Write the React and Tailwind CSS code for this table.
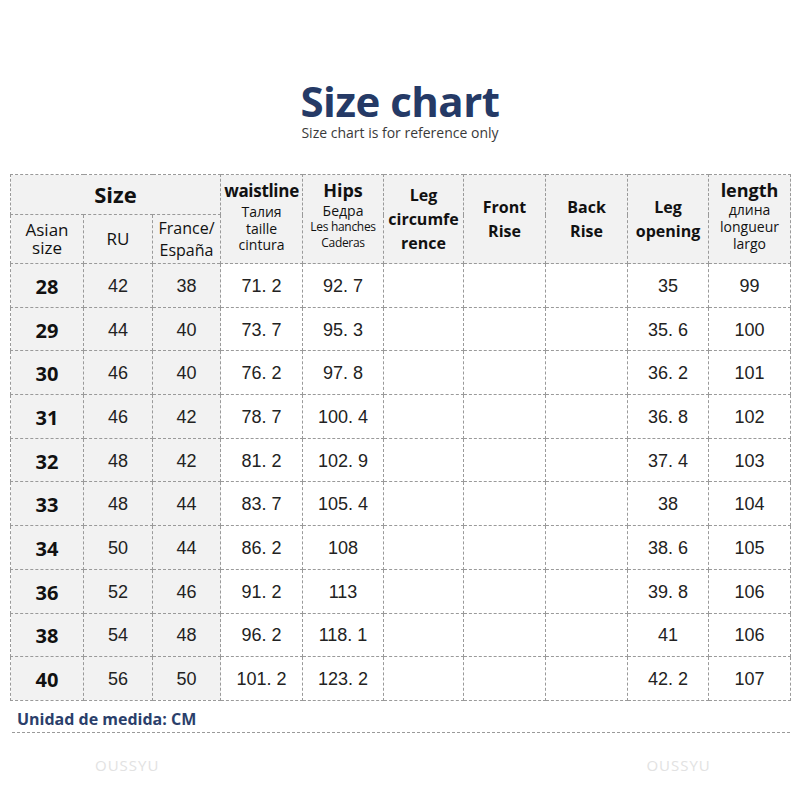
import React from 'react';

const rows = [
  ['28', '42', '38', '71. 2', '92. 7', '35', '99'],
  ['29', '44', '40', '73. 7', '95. 3', '35. 6', '100'],
  ['30', '46', '40', '76. 2', '97. 8', '36. 2', '101'],
  ['31', '46', '42', '78. 7', '100. 4', '36. 8', '102'],
  ['32', '48', '42', '81. 2', '102. 9', '37. 4', '103'],
  ['33', '48', '44', '83. 7', '105. 4', '38', '104'],
  ['34', '50', '44', '86. 2', '108', '38. 6', '105'],
  ['36', '52', '46', '91. 2', '113', '39. 8', '106'],
  ['38', '54', '48', '96. 2', '118. 1', '41', '106'],
  ['40', '56', '50', '101. 2', '123. 2', '42. 2', '107'],
];

const cell = 'border border-dashed border-[#9a9a9a] text-center align-middle p-0';
const num = "font-['Liberation_Sans',sans-serif] text-[18px] text-[#222] pt-[2px]";

export default function App() {
  return (
    <div className="w-[800px] h-[800px] bg-white font-['Open_Sans',sans-serif] text-[#111]">
      <div className="flex flex-col items-center pt-[78px]">
        <h1 className="text-[42px] font-bold leading-[46px] text-[#253a66] tracking-[-0.5px]">Size chart</h1>
        <p className="text-[14px] leading-[17px] text-[#3a3a3a]">Size chart is for reference only</p>
      </div>

      <div className="pl-[10px] pt-[33px]">
        <table className="border-collapse table-fixed w-[780px]">
          <colgroup>
            <col className="w-[73px]" />
            <col className="w-[69px]" />
            <col className="w-[68px]" />
            <col className="w-[82px]" />
            <col className="w-[81px]" />
            <col className="w-[80px]" />
            <col className="w-[82px]" />
            <col className="w-[82px]" />
            <col className="w-[81px]" />
            <col className="w-[82px]" />
          </colgroup>
          <thead className="bg-[#f2f2f2]">
            <tr className="h-[40px]">
              <th colSpan={3} className={cell + ' text-[22px] font-bold'}>Size</th>
              <th rowSpan={2} className={cell + ' align-top pt-[6px]'}>
                <div className="text-[17px] font-bold leading-[20px] tracking-[-0.3px]">waistline</div>
                <div className="text-[14px] font-normal leading-[16.5px] mt-[3px]">Талия<br />taille<br />cintura</div>
              </th>
              <th rowSpan={2} className={cell + ' align-top pt-[4px]'}>
                <div className="text-[18px] font-bold leading-[22px]">Hips</div>
                <div className="text-[14px] font-normal leading-[17px] mt-[1px]">Бедра</div>
                <div className="text-[12px] font-normal leading-[16px] tracking-[-0.3px]">Les hanches<br />Caderas</div>
              </th>
              <th rowSpan={2} className={cell + ' text-[16px] font-bold leading-[24px]'}>Leg<br />circumfe<br />rence</th>
              <th rowSpan={2} className={cell + ' text-[16px] font-bold leading-[24px]'}>Front<br />Rise</th>
              <th rowSpan={2} className={cell + ' text-[16px] font-bold leading-[24px]'}>Back<br />Rise</th>
              <th rowSpan={2} className={cell + ' text-[16px] font-bold leading-[24px]'}>Leg<br />opening</th>
              <th rowSpan={2} className={cell + ' align-top pt-[4px]'}>
                <div className="text-[18px] font-bold leading-[22px]">length</div>
                <div className="text-[14px] font-normal leading-[17px]">длина<br />longueur<br />largo</div>
              </th>
            </tr>
            <tr className="h-[49px]">
              <th className={cell + ' text-[17px] font-normal leading-[18px]'}>Asian<br />size</th>
              <th className={cell + ' text-[17px] font-normal'}>RU</th>
              <th className={cell + ' text-[16px] font-normal leading-[22px]'}>France/<br />España</th>
            </tr>
          </thead>
          <tbody>
            {rows.map((r) => (
              <tr key={r[0]} className="h-[43.7px]">
                <td className={cell + ' bg-[#f2f2f2] text-[20px] font-bold pt-[3px]'}>{r[0]}</td>
                <td className={cell + ' bg-[#f2f2f2] ' + num}>{r[1]}</td>
                <td className={cell + ' bg-[#f2f2f2] ' + num}>{r[2]}</td>
                <td className={cell + ' ' + num}>{r[3]}</td>
                <td className={cell + ' ' + num}>{r[4]}</td>
                <td className={cell}></td>
                <td className={cell}></td>
                <td className={cell}></td>
                <td className={cell + ' ' + num}>{r[5]}</td>
                <td className={cell + ' ' + num}>{r[6]}</td>
              </tr>
            ))}
          </tbody>
        </table>
      </div>

      <div className="ml-[12px] w-[778px] border-b border-dashed border-[#9a9a9a] pl-[5px] pt-[6px] pb-[1px]">
        <span className="text-[16px] font-bold leading-[20px] text-[#2b3f6b]">Unidad de medida: CM</span>
      </div>

      <div className="flex pt-[21px] text-[15px] tracking-[1px] text-[#e2e2e2]">
        <span className="ml-[95px]">OUSSYU</span>
        <span className="ml-[487px]">OUSSYU</span>
      </div>
    </div>
  );
}
